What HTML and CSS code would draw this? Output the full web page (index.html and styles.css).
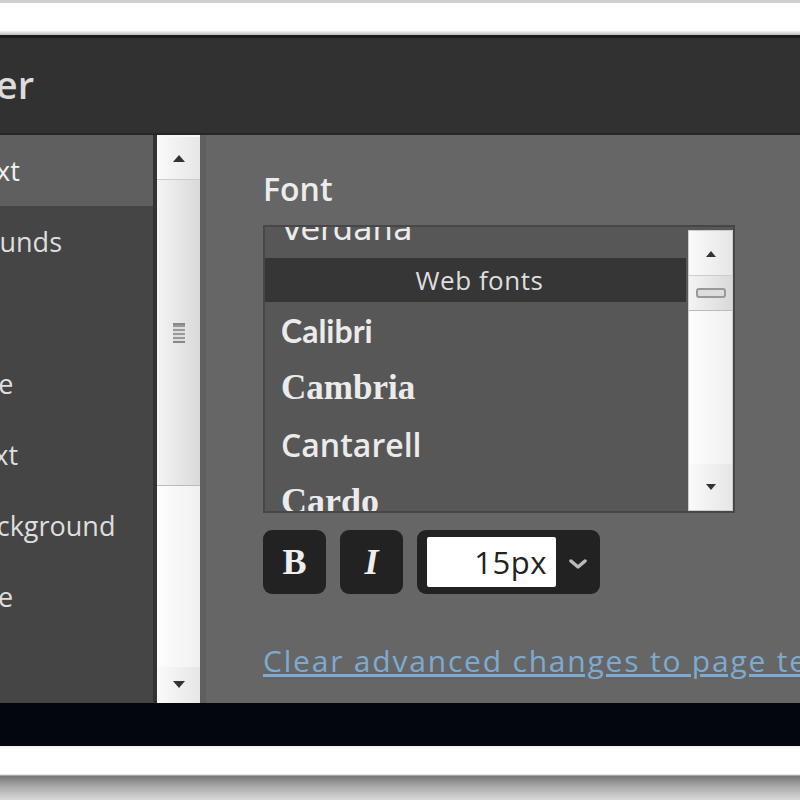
FILE: index.html
```html
<!DOCTYPE html>
<html lang="en">
<head>
    <meta charset="UTF-8">
    <title>Template Designer - Advanced</title>
    <link rel="stylesheet" href="styles.css">
</head>
<body>
    <div class="top-strip"></div>

    <div class="window">
        <div class="titlebar">
            <h1>Template Designer</h1>
        </div>

        <div class="main">
            <ul class="sidebar">
                <li class="active">Page Text</li>
                <li>Backgrounds</li>
                <li>Links</li>
                <li>Blog Title</li>
                <li>Tabs Text</li>
                <li>Tabs Background</li>
                <li>Post Title</li>
            </ul>

            <div class="vscroll side-scroll">
                <div class="arrow up"><svg width="14" height="8" viewBox="0 0 14 8"><path d="M1 8 L7 1 L13 8 Z" fill="#333"/></svg></div>
                <div class="thumb"><span class="grip"></span></div>
                <div class="track"></div>
                <div class="arrow down"><svg width="14" height="8" viewBox="0 0 14 8"><path d="M1 0 L7 7 L13 0 Z" fill="#333"/></svg></div>
            </div>

            <div class="panel">
                <div class="label">Font</div>

                <div class="listbox">
                    <ul class="font-list">
                        <li class="f-verdana">Verdana</li>
                        <li class="group">Web fonts</li>
                        <li class="f-calibri">Calibri</li>
                        <li class="f-cambria">Cambria</li>
                        <li class="f-cantarell">Cantarell</li>
                        <li class="f-cardo">Cardo</li>
                    </ul>
                    <div class="vscroll list-scroll">
                        <div class="arrow up"><svg width="12" height="7" viewBox="0 0 12 7"><path d="M1 7 L6 1 L11 7 Z" fill="#333"/></svg></div>
                        <div class="thumb"><span class="grip"></span></div>
                        <div class="track"></div>
                        <div class="arrow down"><svg width="12" height="7" viewBox="0 0 12 7"><path d="M1 0 L6 6 L11 0 Z" fill="#333"/></svg></div>
                    </div>
                </div>

                <div class="toolbar">
                    <button class="tool bold">B</button>
                    <button class="tool italic">I</button>
                    <div class="size-box">
                        <input class="size-input" type="text" value="15px">
                        <span class="size-arrow"><svg width="18" height="12" viewBox="0 0 18 12"><path d="M2 3 L9 9 L16 3" fill="none" stroke="#bbb" stroke-width="3.5" stroke-linecap="round" stroke-linejoin="round"/></svg></span>
                    </div>
                </div>

                <a class="clear-link" href="#">Clear advanced changes to page text</a>
            </div>
        </div>

        <div class="footer-band"></div>
    </div>

    <div class="bottom-strip"></div>
</body>
</html>
```

FILE: styles.css
```css
:root {
    --header: #313131;
    --sidebar: #454545;
    --selected: #5f5f5f;
    --panel: #666;
    --list: #575757;
    --text: #e4e4e4;
    --link: #7eaad0;
}

html, body {
    margin: 0;
    padding: 0;
}

body {
    width: 800px;
    height: 800px;
    overflow: hidden;
    background-color: #fff;
    font-family: "Open Sans", "DejaVu Sans", sans-serif;
    color: var(--text);
}

ul {
    list-style: none;
    margin: 0;
    padding: 0;
}

.top-strip {
    height: 35px;
    box-sizing: border-box;
    border-top: 3px solid #cfcfcf;
    background: linear-gradient(to bottom, #fff 0, #fff 85%, #bbb 100%);
}

.window {
    margin-left: -110px;
    width: 1000px;
    display: flex;
    flex-direction: column;
}

.titlebar {
    height: 100px;
    box-sizing: border-box;
    background-color: var(--header);
    border-top: 3px solid #1c1c1c;
    border-bottom: 2px solid #262626;
    display: flex;
    align-items: center;
}

.titlebar h1 {
    margin: 0 0 4px -201px;
    font-size: 38px;
    font-weight: 600;
    color: #dcdcdc;
    white-space: nowrap;
}

.main {
    height: 568px;
    display: flex;
    overflow: hidden;
}

.sidebar {
    width: 263px;
    flex-shrink: 0;
    background-color: var(--sidebar);
    border-right: 4px solid #333;
}

.sidebar li {
    height: 71px;
    line-height: 71px;
    padding-left: 8px;
    font-size: 27px;
    white-space: nowrap;
    color: #dedede;
}

.sidebar li.active {
    background-color: var(--selected);
    color: #f2f2f2;
}

/* scrollbars */
.vscroll {
    display: flex;
    flex-direction: column;
    background-color: #f6f6f6;
    flex-shrink: 0;
}

.vscroll .arrow {
    display: flex;
    align-items: center;
    justify-content: center;
    background: linear-gradient(to right, #fafafa, #e6e6e6);
}

.vscroll .thumb {
    display: flex;
    align-items: center;
    justify-content: center;
    background: linear-gradient(to right, #f4f4f4, #d9d9d9);
    border-top: 1px solid #ccc;
    border-bottom: 1px solid #bbb;
}

.vscroll .grip {
    display: block;
    border-top: 2px solid #888;
    border-bottom: 2px solid #888;
}

.vscroll .track {
    flex: 1;
    background: linear-gradient(to right, #fdfdfd, #f0f0f0);
}

.side-scroll {
    width: 43px;
    padding-top: 2px;
}

.side-scroll .arrow {
    height: 42px;
}

.side-scroll .thumb {
    height: 305px;
}

.side-scroll .grip {
    width: 12px;
    height: 16px;
    background: repeating-linear-gradient(to bottom, #999 0, #999 2px, #ddd 2px, #ddd 4px);
}

.side-scroll .arrow.down {
    height: 36px;
}

.panel {
    flex: 1;
    background-color: var(--panel);
    border-left: 6px solid #5f5f5f;
    padding: 30px 0 0 57px;
}

.label {
    font-size: 32px;
    font-weight: 600;
    color: #ececec;
    height: 60px;
    line-height: 48px;
}

.listbox {
    width: 472px;
    height: 288px;
    box-sizing: border-box;
    border: 2px solid #474747;
    background-color: var(--list);
    display: flex;
    overflow: hidden;
}

.font-list {
    flex: 1;
    margin-top: -26px;
}

.font-list li {
    height: 57px;
    line-height: 57px;
    padding-left: 16px;
    font-size: 32px;
    color: #ebebeb;
    white-space: nowrap;
}

.font-list li.group {
    height: 44px;
    line-height: 44px;
    padding-left: 8px;
    text-align: center;
    font-size: 26px;
    letter-spacing: 0.5px;
    background-color: #363636;
    color: #dedede;
}

.font-list .f-verdana { font-family: "DejaVu Sans", sans-serif; }
.font-list .f-calibri { font-family: "Lato", sans-serif; font-weight: 700; }
.font-list .f-cambria { font-family: "Liberation Serif", serif; font-weight: 700; font-size: 35px; }
.font-list .f-cantarell { font-family: "Open Sans", sans-serif; font-weight: 600; }
.font-list .f-cardo { font-family: "Liberation Serif", serif; font-weight: 700; font-size: 36px; }

.list-scroll {
    width: 43px;
    margin: 3px 0 0 2px;
    border: 1px solid #ccc;
}

.list-scroll .arrow {
    height: 44px;
}

.list-scroll .thumb {
    height: 34px;
}

.list-scroll .grip {
    width: 26px;
    height: 6px;
    border-radius: 3px;
    background-color: #ddd;
    border: 2px solid #999;
}

.list-scroll .arrow.down {
    height: 46px;
}

.toolbar {
    display: flex;
    gap: 14px;
    margin-top: 17px;
    height: 64px;
}

.tool {
    width: 63px;
    height: 64px;
    border: none;
    border-radius: 9px;
    background-color: #222;
    color: #eee;
    font-size: 36px;
    font-family: "Liberation Serif", serif;
    padding: 0;
    cursor: pointer;
}

.tool.bold {
    font-weight: 700;
}

.tool.italic {
    font-style: italic;
    font-weight: 700;
}

.size-box {
    display: flex;
    align-items: center;
    width: 183px;
    height: 64px;
    box-sizing: border-box;
    padding: 7px 0 7px 10px;
    background-color: #222;
    border-radius: 9px;
}

.size-input {
    width: 129px;
    height: 50px;
    box-sizing: border-box;
    border: none;
    border-radius: 2px;
    padding: 0 9px 0 0;
    text-align: right;
    font-family: "Open Sans", sans-serif;
    font-size: 31px;
    letter-spacing: 0.5px;
    color: #222;
    background-color: #fff;
    outline: none;
}

.size-arrow {
    flex: 1;
    display: flex;
    justify-content: center;
    padding-top: 4px;
}

.clear-link {
    display: inline-block;
    margin-top: 46px;
    font-size: 30px;
    letter-spacing: 1.8px;
    color: var(--link);
    text-decoration: underline;
    white-space: nowrap;
}

.footer-band {
    height: 43px;
    background-color: #03060c;
}

.bottom-strip {
    height: 54px;
    background: linear-gradient(to bottom, #eef0f0 0, #fff 8%, #fff 52%, #777 56%, #aaa 75%, #d8d8d8 100%);
}
```
